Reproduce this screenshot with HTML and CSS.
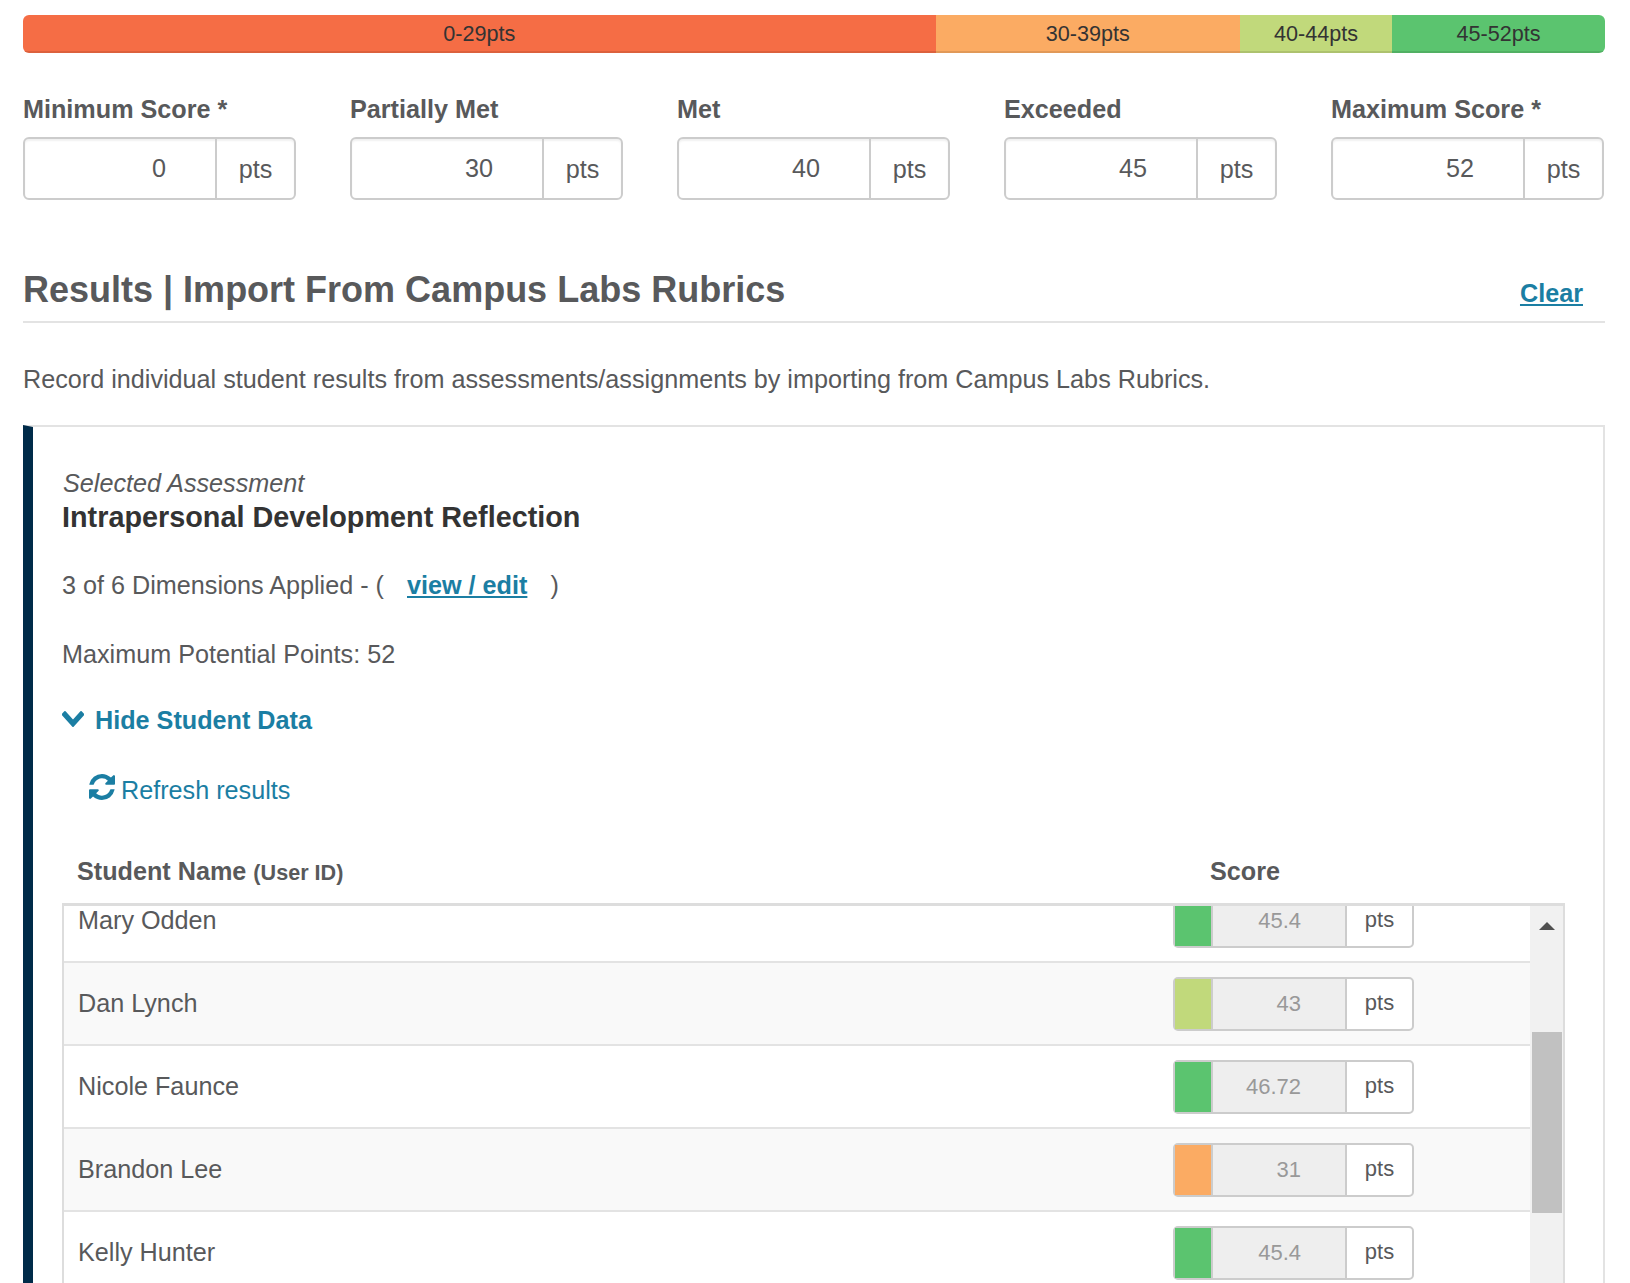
FILE: index.html
```html
<!DOCTYPE html>
<html lang="en">
  <head>
    <meta charset="UTF-8" />
    <title>Results | Import From Campus Labs Rubrics</title>
    <link rel="stylesheet" href="styles.css">
  </head>
  <body>
    <div class="range-bar">
      <div class="range-seg seg-red">0-29pts</div>
      <div class="range-seg seg-orange">30-39pts</div>
      <div class="range-seg seg-lime">40-44pts</div>
      <div class="range-seg seg-green">45-52pts</div>
    </div>

    <div class="score-fields">
      <div class="field">
        <label>Minimum Score *</label>
        <div class="field-group"><span class="field-value">0</span><span class="field-unit">pts</span></div>
      </div>
      <div class="field">
        <label>Partially Met</label>
        <div class="field-group"><span class="field-value">30</span><span class="field-unit">pts</span></div>
      </div>
      <div class="field">
        <label>Met</label>
        <div class="field-group"><span class="field-value">40</span><span class="field-unit">pts</span></div>
      </div>
      <div class="field">
        <label>Exceeded</label>
        <div class="field-group"><span class="field-value">45</span><span class="field-unit">pts</span></div>
      </div>
      <div class="field">
        <label>Maximum Score *</label>
        <div class="field-group"><span class="field-value">52</span><span class="field-unit">pts</span></div>
      </div>
    </div>

    <div class="section-head">
      <h2>Results | Import From Campus Labs Rubrics</h2>
      <a class="clear-link" href="#">Clear</a>
    </div>

    <p class="intro">Record individual student results from assessments/assignments by importing from Campus Labs Rubrics.</p>

    <div class="panel">
      <div class="selected-label">Selected Assessment</div>
      <div class="selected-title">Intrapersonal Development Reflection</div>
      <p class="dimensions">3 of 6 Dimensions Applied - ( <a class="edit-link" href="#">view / edit</a> )</p>
      <p class="max-points">Maximum Potential Points: 52</p>

      <a class="toggle-link" href="#">
        <svg class="chevron" viewBox="109 533 1574 1035" preserveAspectRatio="none"><path d="M1683 808l-742 741q-19 19-45 19t-45-19l-742-741q-19-19-19-45.5t19-45.5l166-165q19-19 45-19t45 19l531 531 531-531q19-19 45-19t45 19l166 165q19 19 19 45.5t-19 45.5z"/></svg>
        Hide Student Data
      </a>

      <a class="refresh-link" href="#">
        <svg class="refresh" viewBox="128 128 1536 1536"><path d="M1639 1056q0 5-1 7-64 268-268 434.5t-478 166.5q-146 0-282.5-55t-243.5-157l-129 129q-19 19-45 19t-45-19-19-45v-448q0-26 19-45t45-19h448q26 0 45 19t19 45-19 45l-137 137q71 66 161 102t187 36q134 0 250-65t186-179q11-17 53-117 8-23 30-23h192q13 0 22.5 9.5t9.5 22.5zm25-800v448q0 26-19 45t-45 19h-448q-26 0-45-19t-19-45 19-45l138-138q-148-137-349-137-134 0-250 65t-186 179q-11 17-53 117-8 23-30 23h-199q-13 0-22.5-9.5t-9.5-22.5v-7q65-268 270-434.5t480-166.5q146 0 284 55.5t245 156.5l130-129q19-19 45-19t45 19 19 45z"/></svg>
        Refresh results
      </a>

      <div class="table-head">
        <div class="head-name">Student Name <small>(User ID)</small></div>
        <div class="head-score">Score</div>
      </div>

      <div class="table-body">
        <div class="rows">
          <div class="rows-inner">
            <div class="row">
              <div class="row-name">Mary Odden</div>
              <div class="score-group"><span class="swatch swatch-green"></span><span class="score-value">45.4</span><span class="score-unit">pts</span></div>
            </div>
            <div class="row">
              <div class="row-name">Dan Lynch</div>
              <div class="score-group"><span class="swatch swatch-lime"></span><span class="score-value">43</span><span class="score-unit">pts</span></div>
            </div>
            <div class="row">
              <div class="row-name">Nicole Faunce</div>
              <div class="score-group"><span class="swatch swatch-green"></span><span class="score-value">46.72</span><span class="score-unit">pts</span></div>
            </div>
            <div class="row">
              <div class="row-name">Brandon Lee</div>
              <div class="score-group"><span class="swatch swatch-orange"></span><span class="score-value">31</span><span class="score-unit">pts</span></div>
            </div>
            <div class="row">
              <div class="row-name">Kelly Hunter</div>
              <div class="score-group"><span class="swatch swatch-green"></span><span class="score-value">45.4</span><span class="score-unit">pts</span></div>
            </div>
          </div>
        </div>
        <div class="scroll-track">
          <div class="scroll-arrow"></div>
          <div class="scroll-thumb"></div>
        </div>
      </div>
    </div>
  </body>
</html>
```

FILE: styles.css
```css
html,
body {
  height: 100%;
  overflow: hidden;
}

body {
  margin: 0;
  padding: 15px 25px 0 23px;
  box-sizing: border-box;
  font-family: "Liberation Sans", Arial, sans-serif;
  font-size: 25.2px;
  color: #58595b;
  background-color: #ffffff;
}

a {
  color: #1b7ea3;
}

.range-bar {
  display: flex;
  height: 38px;
  border-radius: 6px;
  overflow: hidden;
}

.range-seg {
  display: flex;
  align-items: center;
  justify-content: center;
  font-size: 21.6px;
  color: #333333;
  box-shadow: inset 0 -2px 0 rgba(0, 0, 0, 0.1);
}

.seg-red {
  flex: 30;
  background-color: #f56d45;
}

.seg-orange {
  flex: 10;
  background-color: #fbab63;
}

.seg-lime {
  flex: 5;
  background-color: #c1d97b;
}

.seg-green {
  flex: 7;
  background-color: #5bc46f;
}

.score-fields {
  display: grid;
  grid-template-columns: repeat(5, 273px);
  justify-content: space-between;
  margin-top: 42px;
  padding-right: 1px;
}

.field label {
  display: block;
  font-weight: bold;
  line-height: 28px;
  margin-bottom: 14px;
}

.field-group {
  display: flex;
  height: 63px;
  box-sizing: border-box;
  border: 2px solid #cccccc;
  border-radius: 6px;
  box-shadow: inset 0 2px 2px rgba(0, 0, 0, 0.06);
}

.field-value {
  flex: 1;
  padding-right: 49px;
  line-height: 59px;
  text-align: right;
}

.field-unit {
  width: 77px;
  line-height: 61px;
  text-align: center;
  border-left: 2px solid #cccccc;
}

.section-head {
  display: flex;
  justify-content: space-between;
  align-items: flex-end;
  margin-top: 67px;
  padding: 0 22px 8px 0;
  border-bottom: 2px solid #e3e3e3;
}

.section-head h2 {
  margin: 0;
  font-size: 36px;
  line-height: 46px;
}

.clear-link {
  font-weight: bold;
  line-height: 30px;
  margin-bottom: 5px;
}

.intro {
  margin: 41px 0 0;
  line-height: 30px;
}

.panel {
  margin-top: 31px;
  padding: 41px 38px 0 29px;
  border: 2px solid #e3e3e3;
  border-left: 10px solid #002b49;
  min-height: 1000px;
}

.selected-label {
  margin-left: 1px;
  font-style: italic;
  line-height: 31px;
}

.selected-title {
  font-size: 28.8px;
  font-weight: bold;
  line-height: 36px;
  color: #333333;
}

.dimensions {
  margin: 34px 0 0;
  line-height: 32px;
}

.edit-link {
  font-weight: bold;
  margin: 0 16px;
}

.max-points {
  margin: 37px 0 0;
  line-height: 32px;
}

.toggle-link {
  display: flex;
  align-items: center;
  margin-top: 34px;
  font-weight: bold;
  line-height: 32px;
  text-decoration: none;
}

.chevron {
  width: 22px;
  height: 16px;
  margin: -2px 11px 0 0;
  fill: #1b7ea3;
}

.refresh-link {
  display: flex;
  align-items: center;
  margin: 38px 0 0 27px;
  line-height: 32px;
  text-decoration: none;
}

.refresh {
  width: 26px;
  height: 26px;
  margin: -6px 6px 0 0;
  fill: #1b7ea3;
}

.table-head {
  display: flex;
  margin-top: 49px;
  font-weight: bold;
  line-height: 32px;
}

.head-name {
  width: 1133px;
  padding-left: 15px;
}

.head-name small {
  font-size: 21.6px;
}

.table-body {
  display: flex;
  height: 500px;
  margin-top: 14px;
  border-top: 3px solid #dddddd;
  border-left: 2px solid #dddddd;
}

.rows {
  flex: 1;
  overflow: hidden;
}

.rows-inner {
  margin-top: -26px;
}

.row {
  display: flex;
  align-items: center;
  justify-content: space-between;
  box-sizing: border-box;
  height: 83px;
  padding: 0 116px 0 14px;
  border-bottom: 2px solid #e3e3e3;
}

.row:nth-child(even) {
  background-color: #f9f9f9;
}

.score-group {
  display: flex;
  width: 241px;
  height: 54px;
  box-sizing: border-box;
  border: 2px solid #cccccc;
  border-radius: 5px;
  font-size: 22px;
  background-color: #ffffff;
}

.swatch {
  width: 36px;
  border-right: 2px solid #cccccc;
}

.swatch-green {
  background-color: #5bc46f;
}

.swatch-lime {
  background-color: #c1d97b;
}

.swatch-orange {
  background-color: #fbab63;
}

.score-value {
  flex: 1;
  padding-right: 44px;
  line-height: 50px;
  text-align: right;
  color: #999999;
  background-color: #eeeeee;
}

.score-unit {
  width: 65px;
  line-height: 48px;
  text-align: center;
  border-left: 2px solid #cccccc;
}

.scroll-track {
  width: 33px;
  background-color: #f1f1f1;
  border-right: 2px solid #dddddd;
}

.scroll-arrow {
  width: 0;
  height: 0;
  margin: 16px auto 0;
  border-left: 8px solid transparent;
  border-right: 8px solid transparent;
  border-bottom: 8px solid #505050;
}

.scroll-thumb {
  height: 181px;
  margin: 102px 1px 0 2px;
  background-color: #c1c1c1;
}
```
